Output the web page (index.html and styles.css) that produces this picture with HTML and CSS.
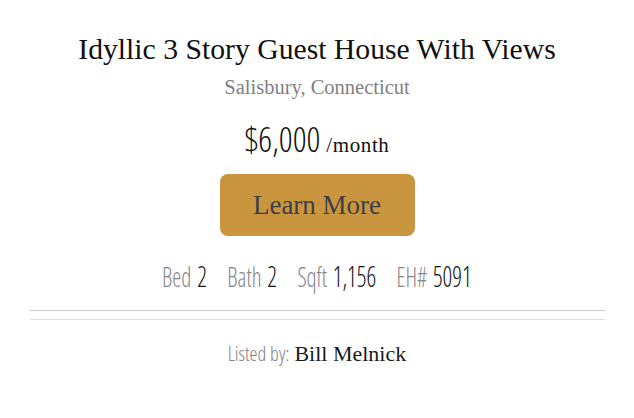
FILE: index.html
```html
<!DOCTYPE html>
<html lang="en">
<head>
<meta charset="utf-8">
<title>Listing</title>
<link rel="stylesheet" href="styles.css">
</head>
<body>
<main class="card">
  <h1 class="title">Idyllic 3 Story Guest House With Views</h1>
  <p class="location">Salisbury, Connecticut</p>
  <p class="price"><span class="amount">$6,000</span><span class="period">/month</span></p>
  <a class="cta" href="#">Learn More</a>
  <ul class="stats">
    <li class="stat"><span class="label">Bed</span><span class="value">2</span></li>
    <li class="stat"><span class="label">Bath</span><span class="value">2</span></li>
    <li class="stat"><span class="label">Sqft</span><span class="value">1,156</span></li>
    <li class="stat"><span class="label">EH#</span><span class="value">5091</span></li>
  </ul>
  <div class="rules">
    <div class="rule rule-top"></div>
    <div class="rule rule-bottom"></div>
  </div>
  <p class="agent"><span class="agent-label">Listed by:</span><span class="agent-name">Bill Melnick</span></p>
</main>
</body>
</html>
```
FILE: styles.css
```css
html, body {
  margin: 0;
  padding: 0;
  background: #ffffff;
}
body {
  width: 634px;
  height: 418px;
  overflow: hidden;
}
.card {
  display: flex;
  flex-direction: column;
  align-items: center;
  padding-top: 31px;
  text-align: center;
}
.title {
  margin: 0;
  font-family: "Liberation Serif", serif;
  font-weight: normal;
  font-size: 29.7px;
  line-height: 36px;
  color: #111111;
}
.location {
  margin: 7px 0 0;
  font-family: "Liberation Serif", serif;
  font-size: 20.5px;
  line-height: 26px;
  color: #808080;
}
.price {
  margin: 19px 0 0;
  height: 40px;
  display: flex;
  align-items: baseline;
  justify-content: center;
  gap: 6px;
  color: #111111;
}
.amount {
  font-family: "Open Sans", sans-serif;
  font-stretch: 75%;
  font-weight: 350;
  font-size: 34px;
  line-height: 40px;
}
.period {
  font-family: "Liberation Serif", serif;
  font-size: 21px;
  line-height: 40px;
  letter-spacing: 0.6px;
}
.cta {
  margin-top: 15px;
  width: 195px;
  height: 62px;
  box-sizing: border-box;
  display: flex;
  align-items: center;
  justify-content: center;
  background: #c9963f;
  border-radius: 8px;
  font-family: "Liberation Serif", serif;
  font-size: 27px;
  color: #3e3e46;
  text-decoration: none;
}
.stats {
  list-style: none;
  margin: 24px 0 0;
  padding: 0;
  height: 32px;
  display: flex;
  align-items: baseline;
  gap: 25px;
  font-family: "Open Sans", sans-serif;
  font-stretch: 75%;
  transform: scaleX(0.82);
}
.stat {
  display: flex;
  align-items: baseline;
  gap: 7px;
}
.label {
  font-size: 28px;
  line-height: 32px;
  font-weight: 300;
  color: #84868c;
}
.value {
  font-size: 29px;
  line-height: 32px;
  font-weight: 350;
  color: #141414;
}
.rules {
  align-self: stretch;
  margin: 18px 29px 0 30px;
  display: flex;
  flex-direction: column;
  gap: 8px;
}
.rule {
  height: 1px;
}
.rule-top {
  background: #c8c8c8;
}
.rule-bottom {
  background: #dcdcdc;
}
.agent {
  margin: 20px 0 0;
  height: 28px;
  display: flex;
  align-items: baseline;
  justify-content: center;
  gap: 5px;
}
.agent-label {
  font-family: "Open Sans", sans-serif;
  font-stretch: 75%;
  font-weight: 300;
  font-size: 20px;
  line-height: 28px;
  color: #808080;
}
.agent-name {
  font-family: "Liberation Serif", serif;
  font-size: 22px;
  line-height: 28px;
  color: #1a1a1a;
}
```
